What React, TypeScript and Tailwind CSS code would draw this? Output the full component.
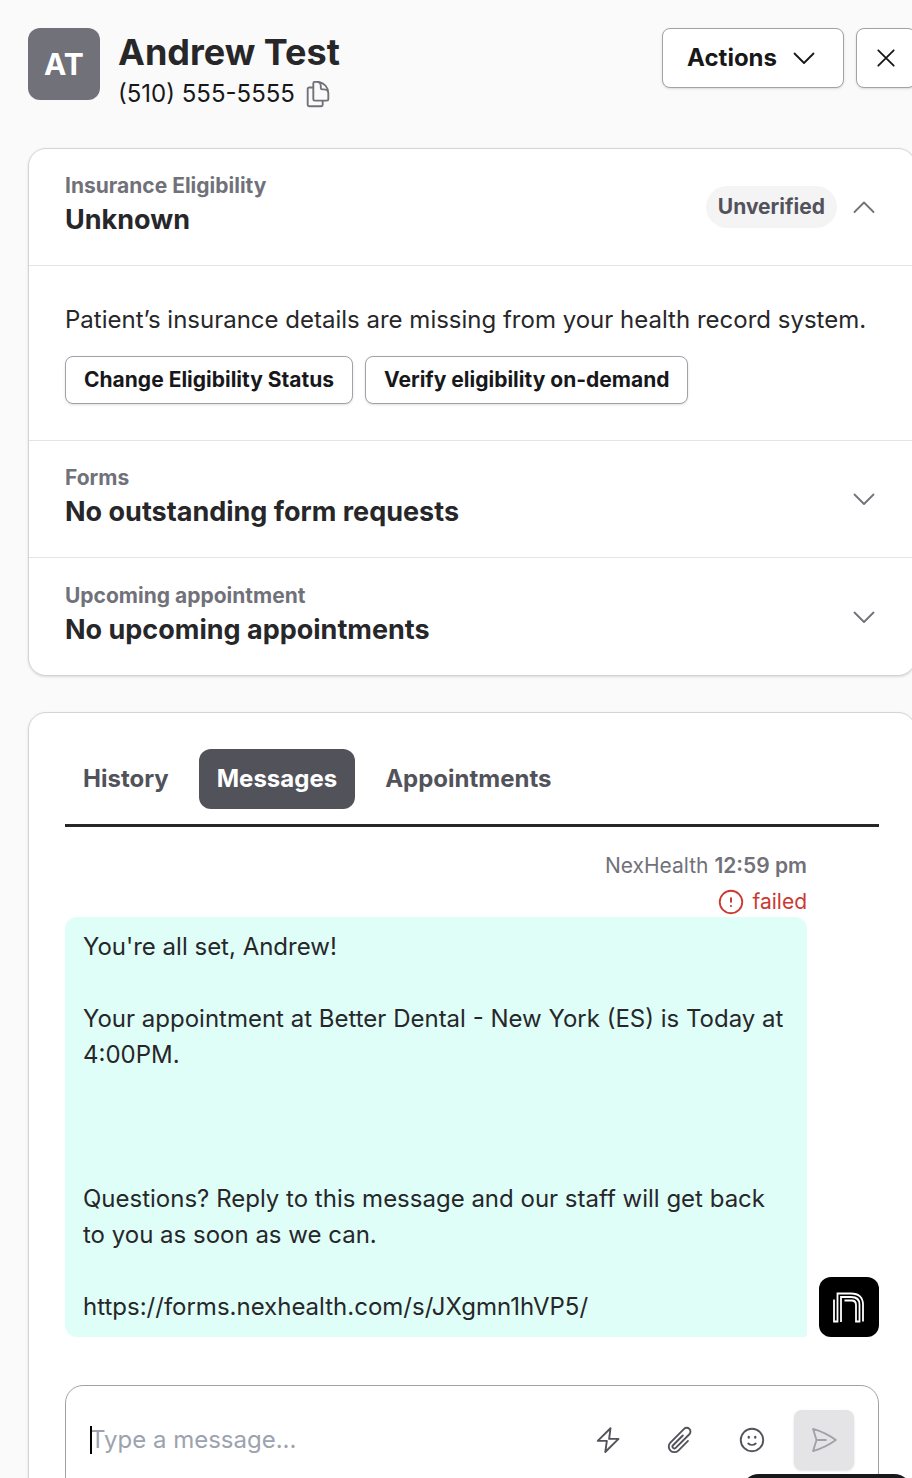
import { useState } from 'react';
import type { ReactNode } from 'react';

function Icon({ className = 'size-[30px]', children }: { className?: string; children: ReactNode }) {
  return (
    <svg
      viewBox="0 0 24 24"
      fill="none"
      stroke="currentColor"
      strokeWidth="1.5"
      strokeLinecap="round"
      strokeLinejoin="round"
      className={`shrink-0 ${className}`}
      aria-hidden="true"
    >
      {children}
    </svg>
  );
}

function Chevron({ up = false }: { up?: boolean }) {
  return (
    <Icon className="size-6">
      <path d={up ? 'M2.5 17 12 7.5 21.5 17' : 'M2.5 7.5 12 17l9.5-9.5'} strokeWidth="1.8" />
    </Icon>
  );
}

function SectionHeader({ label, title, children }: { label: string; title: string; children: ReactNode }) {
  return (
    <div className="flex h-[117px] items-center justify-between border-b border-[#e4e4e7] pl-9 pr-[39px] last:border-b-0">
      <div className="pb-1.5">
        <p className="text-[21px] leading-8 font-bold text-[#71717a]">{label}</p>
        <h2 className="text-[27px] leading-9 font-bold text-[#27272a]">{title}</h2>
      </div>
      <div className="flex items-center gap-[15px] text-[#71717a]">{children}</div>
    </div>
  );
}

const tabs = ['History', 'Messages', 'Appointments'];

const message = `You're all set, Andrew!

Your appointment at Better Dental - New York (ES) is Today at 4:00PM.



Questions? Reply to this message and our staff will get back to you as soon as we can.

https://forms.nexhealth.com/s/JXgmn1hVP5/`;

export default function App() {
  const [activeTab, setActiveTab] = useState('Messages');
  const [draft, setDraft] = useState('');

  return (
    <div className="relative h-screen overflow-hidden bg-[#fafafa] pl-7 pt-7 font-['Inter',sans-serif] text-[#27272a]">
      <div className="-mr-1">
        {/* Header */}
        <header className="flex h-[120px] items-start justify-between">
          <div className="flex gap-[18px]">
            <div className="flex size-[72px] items-center justify-center rounded-xl bg-[#71717a] text-[30px] font-bold text-white">
              AT
            </div>
            <div>
              <h1 className="text-[36px] leading-12 font-bold">Andrew Test</h1>
              <div className="flex items-center gap-2 text-2xl leading-9 text-[#18181b]">
                <span>(510) 555-5555</span>
                <button type="button" aria-label="Copy phone number" className="text-[#71717a]">
                  <Icon>
                    <path d="M15.75 17.25v3.375c0 .621-.504 1.125-1.125 1.125h-9.75a1.125 1.125 0 0 1-1.125-1.125V7.875c0-.621.504-1.125 1.125-1.125H6.75a9.06 9.06 0 0 1 1.5.124m7.5 10.376h3.375c.621 0 1.125-.504 1.125-1.125V11.25c0-4.46-3.243-8.161-7.5-8.876a9.06 9.06 0 0 0-1.5-.124H9.375c-.621 0-1.125.504-1.125 1.125v3.5m7.5 10.375H9.375a1.125 1.125 0 0 1-1.125-1.125v-9.25m12 6.625v-1.875a3.375 3.375 0 0 0-3.375-3.375h-1.5a1.125 1.125 0 0 1-1.125-1.125v-1.5a3.375 3.375 0 0 0-3.375-3.375H9.75" />
                  </Icon>
                </button>
              </div>
            </div>
          </div>
          <div className="flex gap-3 text-[#18181b]">
            <button
              type="button"
              className="flex h-15 items-center gap-[15px] rounded-lg border border-[#a1a1aa] bg-white px-6 pr-[27px] text-2xl font-bold shadow-sm"
            >
              Actions
              <Chevron />
            </button>
            <button
              type="button"
              aria-label="Close"
              className="flex size-15 items-center justify-center rounded-lg border border-[#a1a1aa] bg-white shadow-sm"
            >
              <Icon className="size-6">
                <path d="m4.3 4.3 15.400 15.400M19.700 4.300 4.300 19.700" strokeWidth="1.8" />
              </Icon>
            </button>
          </div>
        </header>

        {/* Patient status */}
        <section className="overflow-hidden rounded-[18px] border border-[#d4d4d8] bg-white shadow-sm">
          <SectionHeader label="Insurance Eligibility" title="Unknown">
            <span className="flex h-[42px] items-center rounded-full bg-[#f4f4f5] px-3 text-[21px] font-bold text-[#52525b]">
              Unverified
            </span>
            <button type="button" aria-label="Collapse insurance eligibility">
              <Chevron up />
            </button>
          </SectionHeader>
          <div className="border-b border-[#e4e4e7] px-9 py-9">
            <p className="text-2xl leading-9">Patient’s insurance details are missing from your health record system.</p>
            <div className="mt-[18px] flex gap-3 text-[21px] font-bold text-[#18181b]">
              <button type="button" className="h-12 rounded-lg border border-[#a1a1aa] bg-white px-[18px] shadow-sm">
                Change Eligibility Status
              </button>
              <button type="button" className="h-12 rounded-lg border border-[#a1a1aa] bg-white px-[18px] shadow-sm">
                Verify eligibility on-demand
              </button>
            </div>
          </div>
          <SectionHeader label="Forms" title="No outstanding form requests">
            <button type="button" aria-label="Expand forms">
              <Chevron />
            </button>
          </SectionHeader>
          <SectionHeader label="Upcoming appointment" title="No upcoming appointments">
            <button type="button" aria-label="Expand upcoming appointment">
              <Chevron />
            </button>
          </SectionHeader>
        </section>

        {/* Activity */}
        <section className="mt-9 rounded-[18px] border border-[#d4d4d8] bg-white px-9 pt-9 pb-9 shadow-sm">
          <nav className="flex gap-3 border-b-3 border-[#27272a] pb-[15px]">
            {tabs.map((tab) => (
              <button
                key={tab}
                type="button"
                onClick={() => setActiveTab(tab)}
                className={`h-15 rounded-xl px-[18px] text-2xl font-bold ${
                  activeTab === tab ? 'bg-[#52525b] text-white' : 'text-[#52525b]'
                }`}
              >
                {tab}
              </button>
            ))}
          </nav>

          <div className="mt-6 flex items-end gap-3">
            <div className="min-w-0 flex-1">
              <p className="text-right text-[21px] leading-[30px] text-[#71717a]">
                NexHealth <span className="font-semibold">12:59 pm</span>
              </p>
              <p className="mt-1.5 flex items-center justify-end gap-2 text-[21px] leading-[30px] text-[#cb3a31]">
                <Icon className="size-[26px]">
                  <circle cx="12" cy="12" r="10.4" strokeWidth="1.7" />
                  <path d="M12 7.8v4.700" strokeWidth="1.9" strokeLinecap="butt" />
                  <circle cx="12" cy="15.7" r="1" fill="currentColor" stroke="none" />
                </Icon>
                failed
              </p>
              <p className="rounded-xl rounded-br-[3px] bg-[#dffef8] px-[18px] py-3 text-2xl leading-9 whitespace-pre-wrap">
                {message}
              </p>
            </div>
            <div className="flex size-15 shrink-0 items-center justify-center rounded-xl bg-black text-white">
              <svg width="32" height="32" viewBox="0 0 32 32" fill="none" stroke="currentColor" strokeWidth="1.8" aria-hidden="true">
                <path d="M1 8.5V30.5H4.5V2.5H18C26 2.5 30 6.5 30 13.5V30.5" />
                <path d="M8 31V6H18C24 6 26.5 8.5 26.5 13.5V30.5H23V14C23 11 21.5 9.5 18.5 9.5H11.5" />
              </svg>
            </div>
          </div>

          <form
            className="mt-12 flex items-center rounded-[18px] border border-[#a1a1aa] bg-white p-6"
            onSubmit={(e) => e.preventDefault()}
          >
            <div className="relative min-w-0 flex-1">
              <input
                type="text"
                aria-label="Message"
                placeholder="Type a message..."
                value={draft}
                onChange={(e) => setDraft(e.target.value)}
                className="w-full text-2xl leading-9 outline-none placeholder:text-[#9ca3af]"
              />
              <span className="absolute top-1 left-0 h-7 w-0.5 bg-black" />
            </div>
            <div className="flex items-center gap-[27px] text-[#52525b]">
              <div className="flex gap-[42px]">
                <button type="button" aria-label="Quick reply">
                  <Icon>
                    <path d="M14 2.6 3.800 12.700H11.100L9.800 21.600 20.400 11.100H12.900Z" />
                  </Icon>
                </button>
                <button type="button" aria-label="Attach file">
                  <Icon>
                    <path d="m18.375 12.739-7.693 7.693a4.5 4.5 0 0 1-6.364-6.364l10.94-10.94A3 3 0 1 1 19.5 7.372L8.552 18.32m.009-.01-.01.01m5.699-9.941-7.81 7.81a1.5 1.5 0 0 0 2.112 2.13" />
                  </Icon>
                </button>
                <button type="button" aria-label="Insert emoji">
                  <Icon>
                    <circle cx="12" cy="12" r="9" />
                    <path d="M9.4 9.4v.700M14.600 9.400v.700" strokeWidth="1.8" />
                    <path d="M9 14.8c1.700 1.500 4.300 1.500 6 0" />
                  </Icon>
                </button>
              </div>
              <button
                type="submit"
                aria-label="Send"
                className="flex size-15 items-center justify-center rounded-lg bg-[#e4e4e7] text-[#a1a1aa] shadow-sm"
              >
                <Icon>
                  <path d="M6 12 3.269 3.125A59.769 59.769 0 0 1 21.485 12 59.768 59.768 0 0 1 3.27 20.875L5.999 12Zm0 0h7.5" />
                </Icon>
              </button>
            </div>
          </form>
        </section>
      </div>

      {/* Chat launcher peeking in at the bottom edge */}
      <div className="absolute right-0 bottom-0 h-1 w-[171px] overflow-hidden">
        <div className="h-12 rounded-[18px] bg-[#18181b]" />
      </div>
    </div>
  );
}
